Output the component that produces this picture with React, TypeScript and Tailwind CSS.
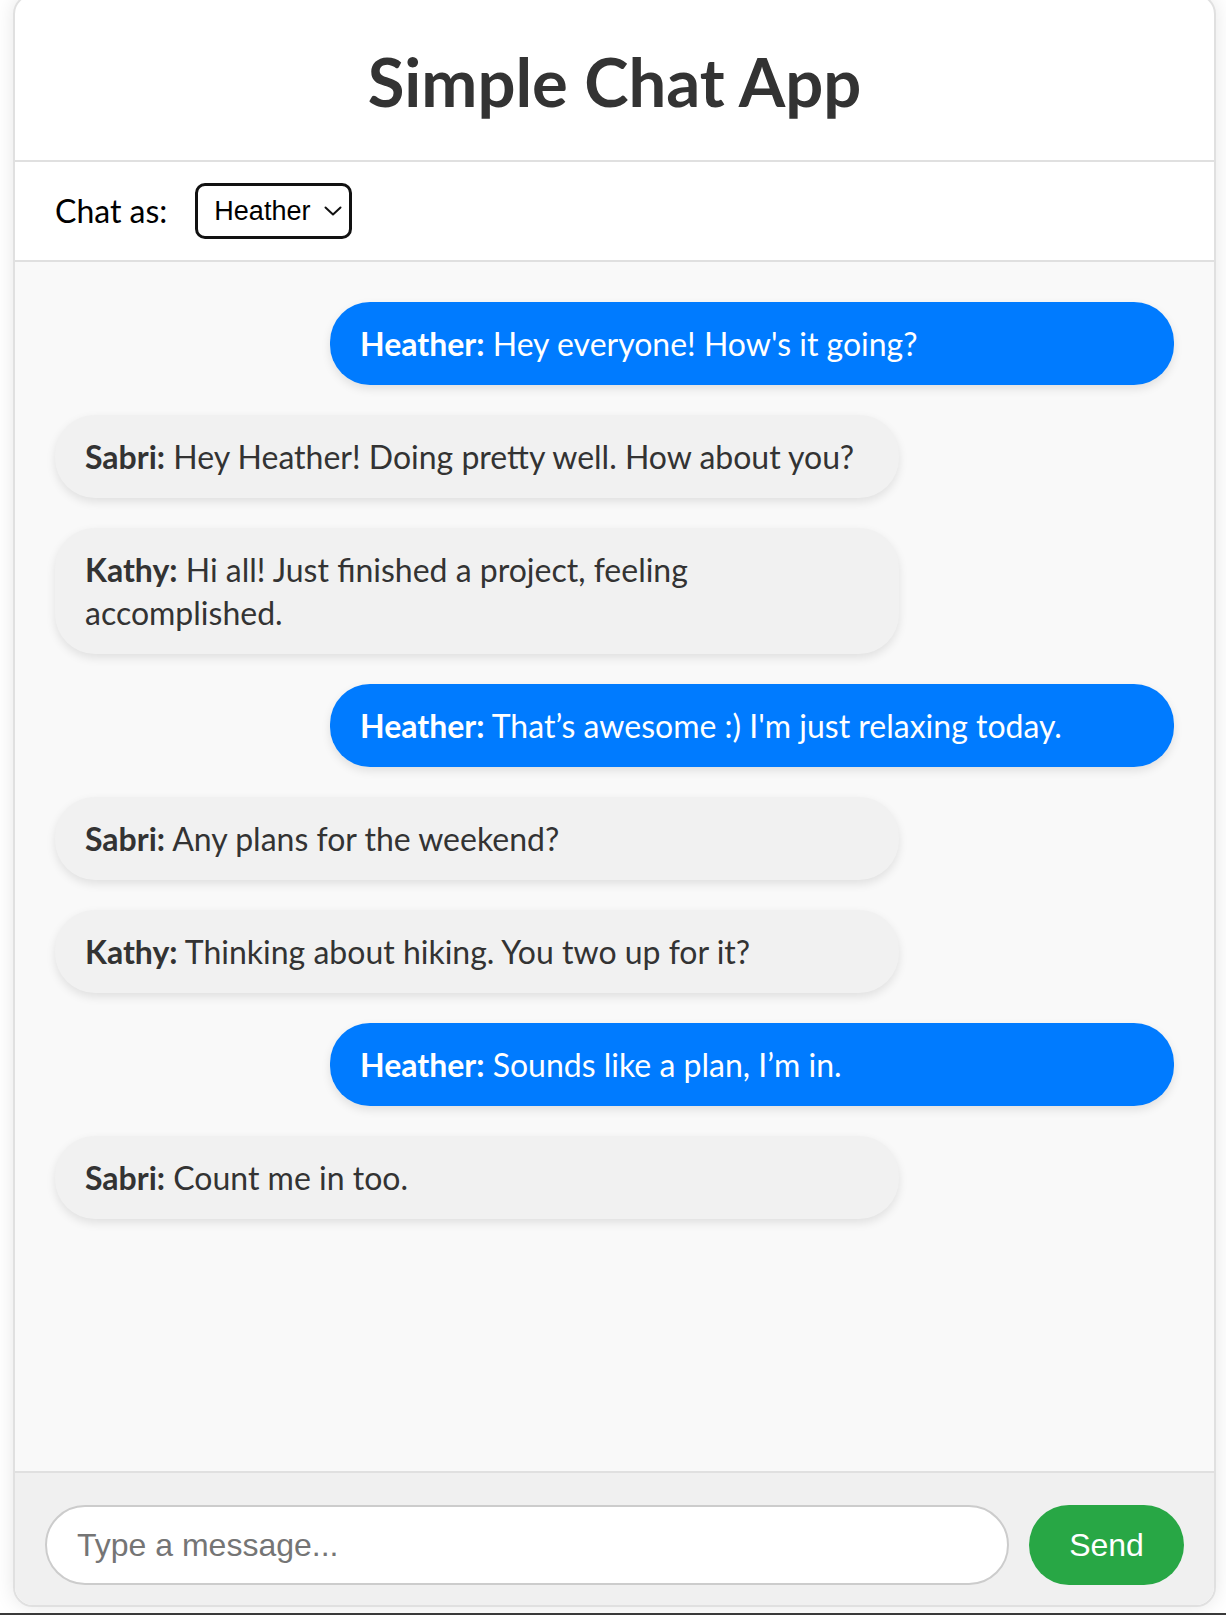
import { useState } from 'react';

type Message = {
  user: string;
  text: string;
};

const initialMessages: Message[] = [
  { user: 'Heather', text: "Hey everyone! How's it going?" },
  { user: 'Sabri', text: 'Hey Heather! Doing pretty well. How about you?' },
  { user: 'Kathy', text: 'Hi all! Just finished a project, feeling accomplished.' },
  { user: 'Heather', text: "That’s awesome :) I'm just relaxing today." },
  { user: 'Sabri', text: 'Any plans for the weekend?' },
  { user: 'Kathy', text: 'Thinking about hiking. You two up for it?' },
  { user: 'Heather', text: 'Sounds like a plan, I’m in.' },
  { user: 'Sabri', text: 'Count me in too.' },
];

const users = ['Heather', 'Sabri', 'Kathy'];

function ChatBubble({ message, mine }: { message: Message; mine: boolean }) {
  return (
    <div className={`flex ${mine ? 'justify-end' : 'justify-start'}`}>
      <div
        className={`w-[844px] rounded-[40px] px-[30px] py-[20px] text-[32px] leading-[43px] shadow-[0_4px_10px_rgba(0,0,0,0.1)] ${
          mine ? 'bg-[#007bff] text-white' : 'bg-[#f1f1f1] text-[#333]'
        }`}
      >
        <strong className="font-bold">{message.user}:</strong> {message.text}
      </div>
    </div>
  );
}

export default function App() {
  const [messages, setMessages] = useState<Message[]>(initialMessages);
  const [currentUser, setCurrentUser] = useState('Heather');
  const [draft, setDraft] = useState('');

  const sendMessage = () => {
    if (!draft.trim()) return;
    setMessages([...messages, { user: currentUser, text: draft.trim() }]);
    setDraft('');
  };

  return (
    <div className="h-[1615px] bg-white flex flex-col overflow-hidden font-['Lato','Segoe_UI',sans-serif]">
      <div className="ml-[13px] w-[1203px] mt-[-6px] mb-[6px] flex-1 flex flex-col bg-white border-2 border-[#e0e0e0] rounded-[20px] overflow-hidden shadow-[0_0_20px_rgba(0,0,0,0.1)]">
        <header className="h-[166px] pt-[6px] flex items-center justify-center border-b-2 border-[#e0e0e0]">
          <h1 className="text-[67px] font-bold text-[#333] leading-none">Simple Chat App</h1>
        </header>

        <div className="h-[100px] flex items-center gap-[28px] pl-[40px] border-b-2 border-[#e0e0e0]">
          <label htmlFor="user-select" className="text-[32px] text-black">
            Chat as:
          </label>
          <div className="relative">
            <select
              id="user-select"
              value={currentUser}
              onChange={(e) => setCurrentUser(e.target.value)}
              className="appearance-none w-[157px] h-[56px] border-[3px] border-[#111] rounded-[10px] bg-white pl-[16px] pr-[24px] text-[27px] text-black font-['Liberation_Sans',Arial,sans-serif] outline-none"
            >
              {users.map((u) => (
                <option key={u} value={u}>
                  {u}
                </option>
              ))}
            </select>
            <svg
              className="pointer-events-none absolute right-[10px] top-[23px] w-[18px] h-[10px]"
              viewBox="0 0 18 10"
              fill="none"
              stroke="#111"
              strokeWidth={2}
              strokeLinecap="round"
              strokeLinejoin="round"
            >
              <path d="M1.5 1.5L9 8.5L16.5 1.5" />
            </svg>
          </div>
        </div>

        <div className="flex-1 bg-[#f9f9f9] px-[40px] pt-[40px] flex flex-col gap-[30px]">
          {messages.map((m, i) => (
            <ChatBubble key={i} message={m} mine={m.user === currentUser} />
          ))}
        </div>

        <div className="flex items-center gap-[20px] bg-[#f0f0f0] border-t-2 border-[#e0e0e0] px-[30px] pt-[32px] pb-[20px]">
          <input
            type="text"
            value={draft}
            onChange={(e) => setDraft(e.target.value)}
            onKeyDown={(e) => e.key === 'Enter' && sendMessage()}
            placeholder="Type a message..."
            className="flex-1 h-[80px] rounded-full border-2 border-[#ccc] bg-white px-[30px] text-[32px] text-[#333] placeholder:text-[#757575] font-['Liberation_Sans',Arial,sans-serif] outline-none"
          />
          <button
            type="button"
            onClick={sendMessage}
            className="w-[155px] h-[80px] rounded-full bg-[#28a745] text-white text-[32px] font-['Liberation_Sans',Arial,sans-serif]"
          >
            Send
          </button>
        </div>
      </div>
      <div className="h-[2px] bg-[#3a3a3a]" />
    </div>
  );
}
